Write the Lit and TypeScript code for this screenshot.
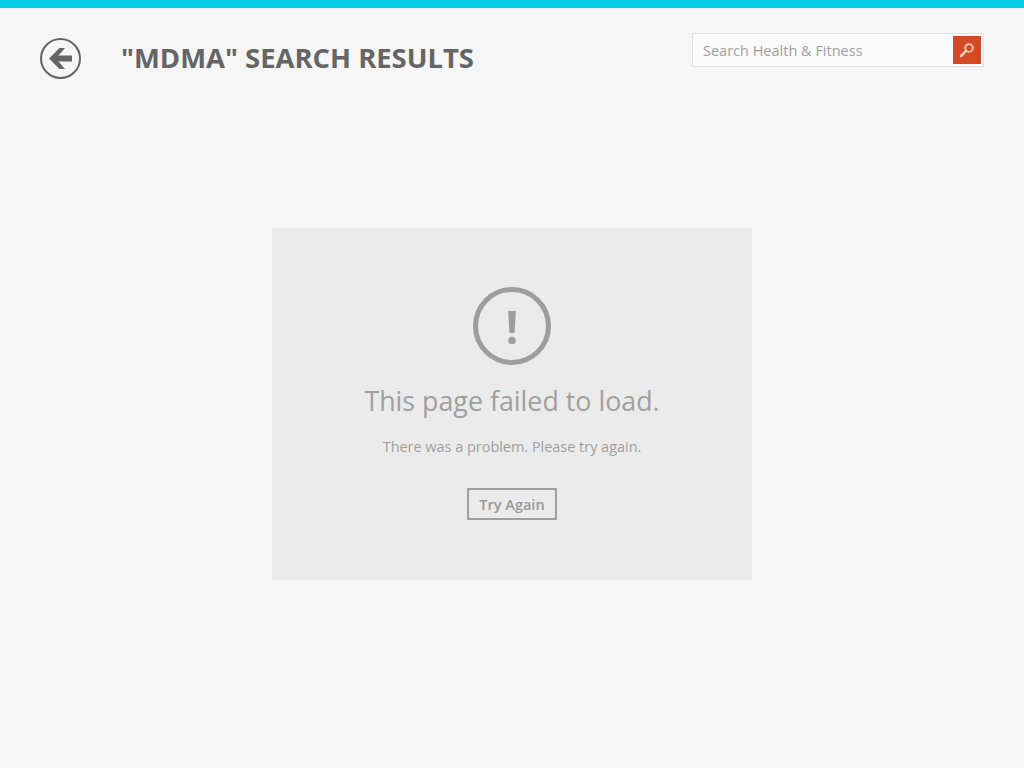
import { LitElement, html, css } from "lit";
import { customElement } from "lit/decorators.js";

@customElement("app-root")
export class AppRoot extends LitElement {
  static styles = css`
    :host { display: block; width: 1024px; height: 768px; overflow: hidden; background: #f6f6f6; font-family: "Open Sans", "Noto Sans", sans-serif; }
    .bar { height: 8px; background: #00cfe3; }
    .header { display: flex; align-items: flex-start; height: 220px; box-sizing: border-box; padding: 30px 40px 0 40px; }
    .back { width: 41px; height: 41px; display: block; flex: none; }
    .title { margin: -1px 0 0 40px; font-size: 27.45px; font-weight: 700; line-height: 41px; color: #656565; white-space: nowrap; letter-spacing: 0; }
    .search { margin-left: auto; margin-top: -5px; margin-right: 0; width: 292px; height: 34px; box-sizing: border-box; border: 1px solid #dfe3e3; background: #fbfbfb; display: flex; align-items: center; justify-content: space-between; padding: 0 2px 0 10px; }
    .search span { font-size: 14.5px; color: #a0a0a0; white-space: nowrap; }
    .sbtn { width: 28px; height: 28px; background: #d34a26; display: flex; align-items: center; justify-content: center; }
    .card { width: 480px; height: 352px; margin: 0 auto; background: #ebebeb; display: flex; flex-direction: column; align-items: center; box-sizing: border-box; padding-top: 59px; }
    .icon { width: 78px; height: 78px; display: block; }
    h1 { margin: 16px 0 0; font-size: 26.8px; font-weight: 400; line-height: 40px; color: #a0a0a0; white-space: nowrap; }
    p { margin: 16px 0 0; font-size: 14.45px; line-height: 20px; color: #a0a0a0; white-space: nowrap; }
    .btn { margin-top: 31px; width: 90px; height: 32px; box-sizing: border-box; border: 2px solid #a0a0a0; display: flex; align-items: center; justify-content: center; font-size: 14.5px; font-weight: 600; color: #989898; }
  `;
  render() {
    return html`
      <div class="bar"></div>
      <div class="header">
        <svg class="back" viewBox="0 0 41 41">
          <circle cx="20.5" cy="20.5" r="19.5" fill="none" stroke="#656565" stroke-width="2"/>
          <path d="M32 20.5H14" fill="none" stroke="#656565" stroke-width="6"/>
          <path d="M19.5 10 L9 20.5 L19.5 31 H25 L16 20.5 L25 10Z" fill="#656565"/>
        </svg>
        <h2 class="title">"MDMA" SEARCH RESULTS</h2>
        <div class="search">
          <span>Search Health &amp; Fitness</span>
          <div class="sbtn">
            <svg width="16" height="16" viewBox="0 0 16 16">
              <circle cx="10" cy="6" r="3.8" fill="none" stroke="#f6c9b4" stroke-width="1.8"/>
              <path d="M7 9L2 14" stroke="#f6c9b4" stroke-width="2.6" stroke-linecap="round"/>
            </svg>
          </div>
        </div>
      </div>
      <div class="card">
        <svg class="icon" viewBox="0 0 78 78">
          <circle cx="39" cy="39" r="36.5" fill="none" stroke="#9e9e9e" stroke-width="5"/>
          <path d="M35.2 24H42.8L41.6 46H36.4Z" fill="#9e9e9e"/>
          <circle cx="39" cy="53.5" r="3.8" fill="#9e9e9e"/>
        </svg>
        <h1>This page failed to load.</h1>
        <p>There was a problem. Please try again.</p>
        <div class="btn">Try Again</div>
      </div>
    `;
  }
}
